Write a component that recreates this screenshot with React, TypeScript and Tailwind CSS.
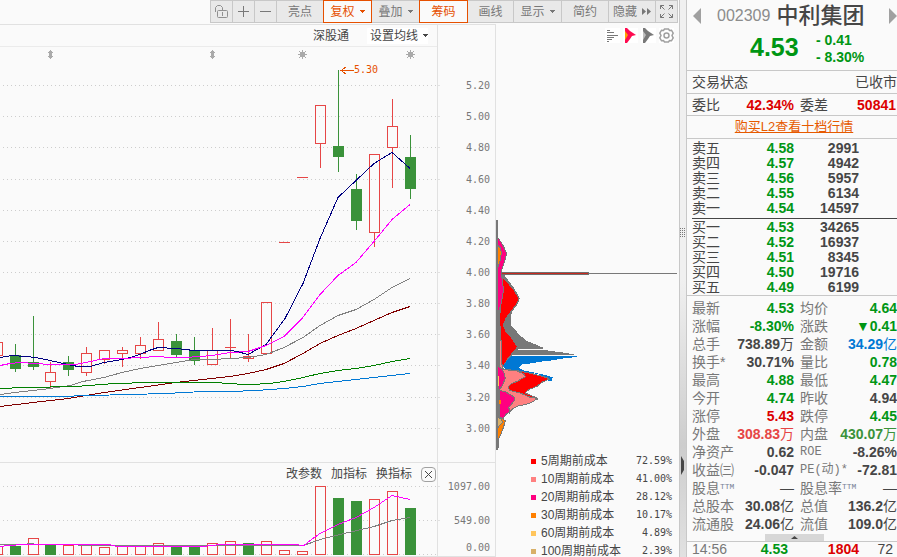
import type { ReactNode } from 'react';
import { clsx } from 'clsx';

interface Candle {
  x: number;
  up: boolean;
  top: number;
  bottom: number;
  high: number;
  low: number;
  volume: number;
}

const candle = (
  x: number,
  up: boolean,
  top: number,
  bottom: number,
  high: number,
  low: number,
  volume: number
): Candle => ({ x, up, top, bottom, high, low, volume });

const candles: Candle[] = [
  candle(-3, true, 342, 355, 342, 355, 546),
  candle(15, false, 355, 368, 344, 371, 546),
  candle(33, false, 362, 366, 316, 369, 538),
  candle(50, true, 372, 381, 362, 387, 545),
  candle(68, false, 362, 369, 356, 375, 545),
  candle(86, true, 353, 372, 347, 375, 545),
  candle(104, true, 350, 359, 350, 363, 547),
  candle(122, true, 350, 353, 347, 366, 546),
  candle(140, true, 345, 353, 337, 358, 546),
  candle(158, true, 339, 350, 322, 350, 543),
  candle(176, false, 341, 354, 334, 357, 546),
  candle(194, false, 351, 360, 337, 364, 546),
  candle(212, true, 350, 364, 328, 364, 543),
  candle(230, true, 347, 347, 319, 358, 541),
  candle(248, true, 356, 358, 334, 361, 543),
  candle(266, true, 302, 353, 302, 353, 541),
  candle(284, true, 242, 242, 242, 242, 550),
  candle(302, true, 177, 177, 177, 177, 551),
  candle(320, true, 105, 143, 105, 167, 486),
  candle(338, false, 146, 156, 70, 171, 498),
  candle(356, false, 189, 220, 174, 229, 501),
  candle(374, true, 154, 232, 154, 246, 499),
  candle(392, true, 126, 147, 99, 187, 491),
  candle(410, false, 157, 188, 135, 198, 508),
];

// volume bars follow their own colour, a limit-up day can still be drawn hollow
const volumeUp = [
  true, false, true, false, true, true, true, true, true, true, false, false,
  true, true, false, true, true, true, true, false, false, true, true, false,
];

const averages = [
  {
    color: '#000080',
    points:
      '0,357 12,355 26,356 36,357 50,360 68,364 78,366 90,366 104,362 122,359 130,357 140,354 149,350 158,347 176,348 194,350 230,350 237,351 248,354 266,344 285,318 303,283 320,238 338,197 356,180 374,163 392,152 410,168',
  },
  {
    color: '#ff00ff',
    points:
      '0,365 10,363 20,362 35,363 50,364 75,364 86,362 104,358 122,358 140,357 158,356 170,357 185,357 200,356 212,355 230,352 248,351 266,345 284,336 302,318 320,294 338,275 356,262 374,241 392,219 410,204',
  },
  {
    color: '#808080',
    points:
      '0,394 15,392 33,390 50,388 70,385 83,381 104,377 122,372 140,368 158,365 176,362 194,359 212,359 230,358 248,357 266,354 284,347 303,337 320,325 338,315 356,309 374,299 392,287 410,278',
  },
  {
    color: '#800000',
    points:
      '0,406 33,402 68,398 104,392 140,387 176,382 212,378 230,376 248,373 266,369 284,363 303,353 320,343 338,335 356,328 374,320 392,312 410,306',
  },
  {
    color: '#008000',
    points:
      '0,388 25,387 76,386 115,383 150,382 220,382 224,383 250,384 270,383 284,381 303,377 320,373 338,370 356,368 374,365 392,361 410,358',
  },
  {
    color: '#0078d4',
    points:
      '0,396 59,396 90,395 130,394 166,393 203,391 230,391 256,390 284,388 303,386 320,383 338,381 356,379 374,377 392,375 410,373',
  },
];

const priceTicks = [
  ['5.20', 85], ['5.00', 116], ['4.80', 147], ['4.60', 179], ['4.40', 210], ['4.20', 241],
  ['4.00', 272], ['3.80', 303], ['3.60', 334], ['3.40', 365], ['3.20', 397], ['3.00', 428],
] as const;

const legend = [
  ['bg-[#ff0000]', '5周期前成本', '72.59%'],
  ['bg-[#ff8080]', '10周期前成本', '41.00%'],
  ['bg-[#ff0080]', '20周期前成本', '28.12%'],
  ['bg-[#ff8000]', '30周期前成本', '10.17%'],
  ['bg-[#ffc55c]', '60周期前成本', '4.89%'],
  ['bg-[#d8b068]', '100周期前成本', '2.39%'],
];

const asks = [
  ['卖五', '4.58', '2991'],
  ['卖四', '4.57', '4942'],
  ['卖三', '4.56', '5957'],
  ['卖二', '4.55', '6134'],
  ['卖一', '4.54', '14597'],
];

const bids = [
  ['买一', '4.53', '34265'],
  ['买二', '4.52', '16937'],
  ['买三', '4.51', '8345'],
  ['买四', '4.50', '19716'],
  ['买五', '4.49', '6199'],
];

const GREEN = 'text-[#009614]';
const RED = 'text-[#dc0000]';
const DARK = 'text-[#464646]';

interface Stat {
  label: string;
  value: string;
  tone: string;
  unit?: string;
  sup?: string;
}

const stats: Stat[] = [
  { label: '最新', value: '4.53', tone: GREEN },
  { label: '均价', value: '4.64', tone: GREEN },
  { label: '涨幅', value: '-8.30%', tone: GREEN },
  { label: '涨跌', value: '▼0.41', tone: GREEN },
  { label: '总手', value: '738.89', unit: '万', tone: DARK },
  { label: '金额', value: '34.29', unit: '亿', tone: 'text-[#0078d4]' },
  { label: '换手*', value: '30.71%', tone: DARK },
  { label: '量比', value: '0.78', tone: GREEN },
  { label: '最高', value: '4.88', tone: GREEN },
  { label: '最低', value: '4.47', tone: GREEN },
  { label: '今开', value: '4.74', tone: GREEN },
  { label: '昨收', value: '4.94', tone: DARK },
  { label: '涨停', value: '5.43', tone: RED },
  { label: '跌停', value: '4.45', tone: GREEN },
  { label: '外盘', value: '308.83', unit: '万', tone: 'text-[#e64646]' },
  { label: '内盘', value: '430.07', unit: '万', tone: 'text-[#3a923a]' },
  { label: '净资产', value: '0.62', tone: DARK },
  { label: 'ROE', value: '-8.26%', tone: DARK },
  { label: '收益㈢', value: '-0.047', tone: DARK },
  { label: 'PE(动)*', value: '-72.81', tone: DARK },
  { label: '股息', sup: 'TTM', value: '', unit: '—', tone: DARK },
  { label: '股息率', sup: 'TTM', value: '', unit: '—', tone: DARK },
  { label: '总股本', value: '30.08', unit: '亿', tone: DARK },
  { label: '总值', value: '136.2', unit: '亿', tone: DARK },
  { label: '流通股', value: '24.06', unit: '亿', tone: DARK },
  { label: '流值', value: '109.0', unit: '亿', tone: DARK },
];

function Caret() {
  return (
    <svg width="5" height="3" className="fill-current" aria-hidden="true">
      <path d="M0 0h5v1H4v1H3v1H2V2H1V1H0z" />
    </svg>
  );
}

interface ToolButtonProps {
  width: string;
  active?: boolean;
  label?: string;
  children: ReactNode;
}

function ToolButton({ width, active = false, label, children }: ToolButtonProps) {
  return (
    <button
      type="button"
      aria-label={label}
      className={clsx(
        '-ml-px flex h-[23px] shrink-0 items-center justify-center gap-[5px] border text-xs whitespace-nowrap',
        width,
        active
          ? 'z-10 border-[#e65000] bg-[#fafafa] text-[#e65000]'
          : 'border-[#c8c8c8] bg-[#e9e9e9] text-[#787878]'
      )}
    >
      {children}
    </button>
  );
}

function Toolbar() {
  return (
    <div className="flex h-6 shrink-0 justify-end pr-px">
      <ToolButton width="w-[23px]" label="锁定">
        <svg width="15" height="15" fill="none" stroke="#909090" aria-hidden="true">
          <path d="M1.5 8V3.5l2-2h3l2 2V6" />
          <rect x="3.5" y="6.5" width="10" height="7" rx="1" />
          <path d="M8.500 8v4" />
        </svg>
      </ToolButton>
      <ToolButton width="w-[23px]" label="放大">
        <svg width="11" height="11" stroke="#787878" aria-hidden="true">
          <path d="M0 5.500h11M5.500 0v11" />
        </svg>
      </ToolButton>
      <ToolButton width="w-[23px]" label="缩小">
        <svg width="11" height="11" stroke="#787878" aria-hidden="true">
          <path d="M0 5.500h11" />
        </svg>
      </ToolButton>
      <ToolButton width="w-12">亮点</ToolButton>
      <ToolButton width="w-[49px]" active>
        复权
        <Caret />
      </ToolButton>
      <ToolButton width="w-[49px]">
        叠加
        <Caret />
      </ToolButton>
      <ToolButton width="w-[49px]" active>筹码</ToolButton>
      <ToolButton width="w-[47px]">画线</ToolButton>
      <ToolButton width="w-[49px]">
        显示
        <Caret />
      </ToolButton>
      <ToolButton width="w-12">简约</ToolButton>
      <ToolButton width="w-12">
        隐藏
        <svg width="9" height="7" className="fill-current" aria-hidden="true">
          <path d="M0 0l4 3.500L0 7zM5 0l4 3.500L5 7z" />
        </svg>
      </ToolButton>
      <ToolButton width="w-[23px]" label="全屏">
        <svg width="13" height="13" fill="none" stroke="#787878" aria-hidden="true">
          <path d="M.5 4V.5H4M.5.500l4 4M9 .5h3.500V4M12.500.500l-4 4M.5 9v3.500H4M.5 12.500l4-4M9 12.500h3.500V9M12.500 12.500l-4-4" />
        </svg>
      </ToolButton>
    </div>
  );
}

function GridLine({ y }: { y: number }) {
  return <path d={`M3 ${y + 0.5}H437`} stroke="#cdcdcd" strokeDasharray="1 3" />;
}

function Sun({ x }: { x: number }) {
  return (
    <g transform={`translate(${x} 54)`} stroke="#aaa" fill="#aaa">
      <path d="M.5-4v9M-4 .5h9M-3-3l7 7M4-3l-7 7" />
      <rect x="-2" y="-2" width="5" height="5" stroke="none" />
    </g>
  );
}

function CandleShape({ item }: { item: Candle }) {
  const { x, up, top, bottom, high, low } = item;
  if (!up) {
    return (
      <g fill="#3a923a">
        <rect x={x} y={high} width="1" height={low - high + 1} />
        <rect x={x - 5} y={top} width="11" height={bottom - top + 1} />
      </g>
    );
  }
  return (
    <g fill="#e64646">
      <rect x={x} y={high} width="1" height={top - high} />
      <rect x={x} y={bottom} width="1" height={low - bottom + 1} />
      {top === bottom ? (
        <rect x={x - 5} y={top} width="11" height="1" />
      ) : (
        <rect x={x - 4.5} y={top + 0.5} width="10" height={bottom - top} fill="none" stroke="#e64646" />
      )}
    </g>
  );
}

function PriceChart() {
  return (
    <svg width="437" height="415" viewBox="0 47 437 415" shapeRendering="crispEdges" className="shrink-0">
      {priceTicks.map(([label, y]) => (
        <GridLine key={label} y={y} />
      ))}
      {[50, 212].map((x) => (
        <path key={x} d={`M${x} 50h1l2 3h-1v3h1l-2 3h-1l-2-3h1v-3h-1z`} fill="#aaa" />
      ))}
      <Sun x={302} />
      <Sun x={410} />
      {candles.map((item) => (
        <CandleShape key={item.x} item={item} />
      ))}
      {averages.map(({ color, points }) => (
        <polyline key={color} points={points} fill="none" stroke={color} transform="translate(0 .5)" />
      ))}
      <path d="M340 70.500h14M346 67l-5 3.500 5 3.500" fill="none" stroke="#e65000" />
      <text x="354" y="73" fontSize="10" fill="#e65000" fontFamily="DejaVu Sans Mono, monospace">
        5.30
      </text>
    </svg>
  );
}

function VolumeChart() {
  return (
    <svg width="437" height="71" viewBox="0 485 437 71" shapeRendering="crispEdges" className="shrink-0">
      {[486, 520, 554].map((y) => (
        <GridLine key={y} y={y} />
      ))}
      {candles.map(({ x, volume }, i) =>
        volumeUp[i] ? (
          <rect key={x} x={x - 4.5} y={volume + 0.5} width="10" height={554 - volume} fill="#fafafa" stroke="#e64646" />
        ) : (
          <rect key={x} x={x - 5} y={volume} width="11" height={555 - volume} fill="#3a923a" />
        )
      )}
      <g fill="none" transform="translate(0 .5)">
        <polyline
          stroke="#808080"
          points="0,544 25,544 30,543 38,544 115,545 303,545 312,542 320,539 340,534 374,526 392,520 410,517"
        />
        <polyline
          stroke="#ff00ff"
          points="0,546 8,545 24,544 109,544 117,546 203,546 221,544 294,544 304,545 310,540 320,533 338,524 356,517 374,507 392,495 410,499"
        />
      </g>
    </svg>
  );
}

function KLinePanel() {
  return (
    <section className="flex min-w-0 flex-1 flex-col border-r border-[#e1e1e1]">
      <div className="flex h-[22px] shrink-0 items-center justify-end gap-[18px] border-b border-[#ebebeb] pr-[9px] text-xs text-[#464646]">
        <button type="button">深股通</button>
        <button type="button" className="flex items-center gap-[5px] bg-white pl-[3px]">
          设置均线
          <Caret />
        </button>
      </div>
      <div className="flex shrink-0 justify-end overflow-hidden">
        <PriceChart />
      </div>
      <div className="flex h-[23px] shrink-0 items-center justify-end gap-[9px] border-t border-[#e1e1e1] pr-px text-xs text-[#464646]">
        <button type="button">改参数</button>
        <button type="button">加指标</button>
        <button type="button">换指标</button>
        <button
          type="button"
          aria-label="关闭"
          className="flex size-[15px] items-center justify-center rounded-sm border border-[#a0a0a0]"
        >
          <svg width="7" height="7" stroke="#464646" aria-hidden="true">
            <path d="M0 0l7 7M7 0L0 7" />
          </svg>
        </button>
      </div>
      <div className="flex shrink-0 justify-end overflow-hidden border-b border-[#e1e1e1]">
        <VolumeChart />
      </div>
    </section>
  );
}

function AxisPanel() {
  return (
    <div className="w-[58px] shrink-0 border-r border-[#e1e1e1]">
      <svg
        width="57"
        height="532"
        viewBox="438 25 57 532"
        fontSize="10"
        fill="#787878"
        textAnchor="end"
        fontFamily="DejaVu Sans Mono, monospace"
      >
        {priceTicks.map(([label, y]) => (
          <g key={label}>
            <rect x="438" y={y} width="2" height="1" fill="#e1e1e1" />
            <text x="490" y={y + 4}>{label}</text>
          </g>
        ))}
        <path d="M438 462.500h57M438 486.500h2M438 520.500h2M438 556.500h57" stroke="#e1e1e1" />
        <text x="490" y="490">1097.00</text>
        <text x="490" y="524">549.00</text>
        <text x="490" y="551">0.00</text>
      </svg>
    </div>
  );
}

// cost distribution, drawn at three units per pixel
function ChipChart() {
  return (
    <svg width="183" height="405" viewBox="78 -489 549 1215" className="shrink-0" shapeRendering="crispEdges">
      <path
        fill="#787878"
        d="M78 30h3l1 26 2 26 12 18 16 30-4 15-6 15-8 24 36 47 20 34-9 20-13 17-6 18 1 25 26 30 22 18 49 20v4h-76v3h79l58 8 47 8h-200l-40 40v227l-4 17h-5z"
      />
      <g stroke="#787878" strokeWidth="3">
        <path
          fill="#ff0000"
          d="M96 199l12 13 24 28 15 26-9 19-15 20-15 20-8 20 8 20 18 20 16 25-6 10-20 22-18 30-6-8 1-62-4-72z"
        />
        <path
          fill="#ff0080"
          d="M83 82l15 22 12 26-5 20-7 20-5 20 5 25 2 27-5 33-9 30v60l-3 70z"
        />
        <path fill="#ff8000" d="M83 106l9 9 2 16-4 22-7 20z" />
      </g>
      <path
        fill="#0078d4"
        d="M124 438h196v3l-37 4-35 6-36 4-34 6-22 2-10 9 13 9 39 8 31 7 19 6-3 10-10 1-30-21-98-13-8-13z"
      />
      <g stroke="#787878" strokeWidth="3">
        <path
          fill="#ff0000"
          d="M103 478l38 4 42 8 48 13 5 5-21 9-14 12-21 8-11 7-3 5 20 9 16 6 1 5-35-5-48-15-12-18 9-14z"
        />
        <path
          fill="#ff8080"
          d="M96 478l44 5 20 7 6 10-23 13-22 10-6 8 3 10 35 9 28 12 20 3-11 10-25 9-25 5-15 10-7 10-9-8-18-40-3-22 5-20z"
        />
        <path fill="#ff8080" d="M87 392h8v68l4 14h-12z" />
        <path fill="#ff0080" d="M83 468l12 8 7 14 4 15-9 22-10 13-4-20z" />
        <path
          fill="#ff0080"
          d="M87 541l19 4 18 11 9 5 1 9-12 16-7 6 6 11-13 10-9 13-12-7z"
        />
        <path fill="#ff8000" d="M84 630l12-6 10 9-5 17-8 22-10 22z" />
        <path fill="#d8b068" d="M82 620l11 7 5 9-11 13-5 5z" />
      </g>
      <path fill="#ffc55c" d="M83 495l4 6v22l-4 14zM82 562h2v60h-2z" />
      <path fill="#ff8000" d="M88 570h6v12h-6z" />
      <rect x="78" y="30" width="5" height="680" fill="#787878" />
      <rect x="92" y="186" width="265" height="9" fill="#6e6e6e" />
      <rect x="95" y="189" width="259" height="3" fill="#c8281e" />
      <rect x="357" y="189" width="264" height="3" fill="#787878" />
    </svg>
  );
}

function ChipPanel() {
  return (
    <section className="flex w-[183px] shrink-0 flex-col">
      <div className="flex h-[23px] shrink-0 items-center justify-end gap-[3px] pr-[5px]">
        <button type="button" aria-label="列表" className="bg-white">
          <svg width="15" height="15" stroke="#787878" aria-hidden="true">
            <path d="M2 2.500h3M2 4.500h7M2 7.500h11M2 9.500h7M2 11.500h5M2 13.500h2" />
          </svg>
        </button>
        <button type="button" aria-label="成本分布" className="bg-white">
          <svg width="15" height="15" aria-hidden="true">
            <path d="M2 0h2l3 3 3 2 3 2-4 1-2 3-3 4H2z" fill="#ff0a50" />
            <path d="M2 3l3 4-3 5z" fill="#ffa000" />
          </svg>
        </button>
        <button type="button" aria-label="历史分布" className="bg-white">
          <svg width="15" height="15" aria-hidden="true">
            <path d="M2 0h2l3 3 3 2 3 2-4 1-2 3-3 4H2z" fill="#787878" />
            <path d="M2 3l3 4-3 5z" fill="#bebebe" />
          </svg>
        </button>
        <button type="button" aria-label="设置" className="bg-white">
          <svg width="15" height="15" fill="none" stroke="#a0a0a0" aria-hidden="true">
            <path
              strokeWidth="1.500"
              d="M5.500 1h4l1 1.500 2-.3 1.700 3-1.200 2.300 1.200 2.300-1.700 3-2-.3-1 1.500h-4l-1-1.500-2 .3-1.700-3L2 7.500.8 5.200l1.700-3 2 .3z"
            />
            <circle cx="7.500" cy="7.500" r="2.500" strokeWidth="1.500" />
          </svg>
        </button>
      </div>
      <ChipChart />
      <ul className="pr-[7px] pl-[35px] text-xs text-[#464646]">
        {legend.map(([color, name, value]) => (
          <li key={name} className="flex h-[18px] items-center">
            <span className={clsx('mr-[5px] size-[5px]', color)} />
            <span className="whitespace-nowrap">{name}</span>
            <span className="ml-auto font-['DejaVu_Sans_Mono',monospace] text-[10px]">{value}</span>
          </li>
        ))}
      </ul>
    </section>
  );
}

function Splitter() {
  return (
    <div className="w-[7px] shrink-0 border-l border-[#c8c8c8] bg-linear-to-b from-[#f0f0f0] from-50% via-[#cdcdcd] via-80% to-[#e1e1e1]">
      <svg width="6" height="480" aria-hidden="true">
        <path d="M.5 228v9M2.500 228v9M4.500 228v9" stroke="#787878" strokeDasharray="1 1" />
        <path d="M1 456l3 5v9l-3 5z" fill="#464646" />
      </svg>
    </div>
  );
}

function OrderTable({ rows }: { rows: string[][] }) {
  return (
    <table className="w-[167px] table-fixed border-collapse leading-[15px]">
      <tbody>
        {rows.map(([name, price, amount]) => (
          <tr key={name} className="h-[15px]">
            <th scope="row" className="w-[37px] p-0 text-left font-normal">{name}</th>
            <td className={clsx('p-0 text-right font-bold', GREEN)}>{price}</td>
            <td className="w-[65px] p-0 text-right font-bold">{amount}</td>
          </tr>
        ))}
      </tbody>
    </table>
  );
}

function StatItem({ stat }: { stat: Stat }) {
  return (
    <div className="flex h-[18px] items-center justify-between leading-[18px] whitespace-nowrap">
      <dt
        className={clsx(
          'text-[#787878]',
          /^[A-Z]/.test(stat.label) && "font-['Liberation_Mono','Noto_Sans_CJK_SC',monospace] text-xs"
        )}
      >
        {stat.label}
        {stat.sup && (
          <sup className="font-['Liberation_Mono',monospace] text-[8px] leading-none text-[#788296]">{stat.sup}</sup>
        )}
      </dt>
      <dd className={clsx('font-bold', stat.tone)}>
        {stat.value}
        {stat.unit && <span className="font-normal">{stat.unit}</span>}
      </dd>
    </div>
  );
}

function QuotePanel() {
  return (
    <aside className="w-[211px] shrink-0 border-l border-[#c8c8c8] text-sm text-[#464646]">
      <header className="h-[70px]">
        <div className="flex h-8 items-center">
          <button type="button" aria-label="上一只" className="ml-[6px]">
            <svg width="8" height="16" aria-hidden="true">
              <path d="M8 0v16L0 8z" fill="#a0a0a0" />
            </svg>
          </button>
          <span className="ml-4 text-base text-[#8c8c8c]">002309</span>
          <h1 className="ml-[6px] text-[22px] leading-8 font-medium">中利集团</h1>
          <button type="button" aria-label="下一只" className="ml-auto">
            <svg width="8" height="16" aria-hidden="true">
              <path d="M0 0v16l8-8z" fill="#a0a0a0" />
            </svg>
          </button>
        </div>
        <div className={clsx('flex items-start pl-[63px] font-bold', GREEN)}>
          <span className="w-[66px] text-[25px] leading-[30px]">4.53</span>
          <div className="leading-[17px]">
            <p>- 0.41</p>
            <p>- 8.30%</p>
          </div>
        </div>
      </header>
      <div className="flex h-[23px] items-center justify-between border-t border-[#c8c8c8] pl-[5px]">
        <span>交易状态</span>
        <span>已收市</span>
      </div>
      <div className="grid h-[22px] grid-cols-[102px_1fr] items-center gap-x-[6px] border-t border-[#c8c8c8] pl-[5px]">
        <div className="flex justify-between">
          <span>委比</span>
          <b className={RED}>42.34%</b>
        </div>
        <div className="flex justify-between pr-px">
          <span>委差</span>
          <b className={RED}>50841</b>
        </div>
      </div>
      <div className="flex h-6 items-center justify-center border-y border-[#c8c8c8] pl-1">
        <a href="#level2" className="text-[13px] text-[#e65a00] underline">购买L2查看十档行情</a>
      </div>
      <div className="pt-[2px] pl-[5px]">
        <div className="border-b border-[#464646] pb-[2px]">
          <OrderTable rows={asks} />
        </div>
        <div className="pt-px">
          <OrderTable rows={bids} />
        </div>
      </div>
      <dl className="grid grid-cols-[102px_1fr] gap-x-[6px] border-t border-[#c8c8c8] pt-[3px] pl-[5px]">
        {stats.map((stat) => (
          <StatItem key={stat.label} stat={stat} />
        ))}
      </dl>
      <div className="flex h-[9px] items-end justify-center border-b border-[#c8c8c8] pl-1">
        <button type="button" aria-label="展开" className="flex h-[7px] w-[59px] items-center justify-center bg-[#d7d7d7]">
          <svg width="7" height="3" aria-hidden="true">
            <path d="M0 3L3.500 0 7 3z" fill="#464646" />
          </svg>
        </button>
      </div>
      <div className="grid h-[15px] grid-cols-[60px_36px_71px_1fr] items-center pr-1 pl-[5px] text-right leading-[15px]">
        <span className="text-left text-[#787878]">14:56</span>
        <b className={GREEN}>4.53</b>
        <b className={RED}>1804</b>
        <span>72</span>
      </div>
    </aside>
  );
}

export default function App() {
  return (
    <div className="flex h-screen overflow-hidden bg-[#fafafa] font-['Liberation_Sans','Noto_Sans_CJK_SC',sans-serif]">
      <main className="flex min-w-0 flex-1 flex-col">
        <Toolbar />
        <div className="flex min-h-0 flex-1">
          <div className="flex min-w-0 flex-1 border-t border-[#e1e1e1]">
            <KLinePanel />
            <AxisPanel />
          </div>
          <ChipPanel />
        </div>
      </main>
      <Splitter />
      <QuotePanel />
    </div>
  );
}
